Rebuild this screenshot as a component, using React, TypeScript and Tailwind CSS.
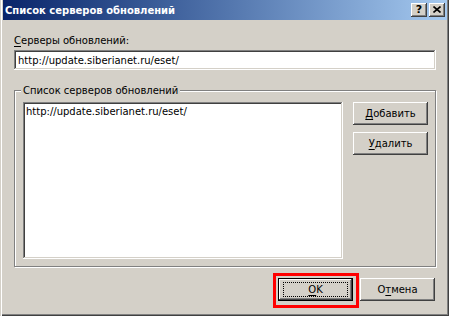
import React from "react";

const raised =
  "shadow-[inset_-1px_-1px_#404040,inset_1px_1px_#ffffff,inset_-2px_-2px_#808080,inset_2px_2px_#d4d0c8]";
const sunken =
  "shadow-[inset_-1px_-1px_#ffffff,inset_1px_1px_#808080,inset_-2px_-2px_#d4d0c8,inset_2px_2px_#404040]";

function Btn({ children, def }: { children: React.ReactNode; def?: boolean }) {
  if (def) {
    return (
      <div className="w-[75px] h-[23px] border border-black bg-[#d4d0c8] relative">
        <div
          className={
            "w-full h-full flex items-center justify-center " +
            "shadow-[inset_-1px_-1px_#404040,inset_1px_1px_#ffffff,inset_-2px_-2px_#808080,inset_2px_2px_#d4d0c8]"
          }
        >
          {children}
        </div>
        <div className="absolute left-[4px] top-[3px] right-[4px] bottom-[3px] border border-dotted border-black" />
      </div>
    );
  }
  return (
    <div className={"w-[75px] h-[23px] bg-[#d4d0c8] flex items-center justify-center " + raised}>
      {children}
    </div>
  );
}

export default function App() {
  return (
    <div
      className={
        "w-[449px] h-[316px] bg-[#d4d0c8] relative flex flex-col pl-[3px] pr-[2px] pb-[2px] text-[10px] leading-[13px] text-black font-['DejaVu_Sans',sans-serif] " +
        "shadow-[inset_1px_0_#d4d0c8,inset_2px_0_#ffffff,inset_-1px_-1px_#404040,inset_-2px_-2px_#808080]"
      }
    >
      {/* Title bar */}
      <div className="h-[20px] shrink-0 flex items-center bg-gradient-to-r from-[#0a246a] to-[#a6caf0] pl-[2px] pr-[2px]">
        <span className="text-white font-bold text-[10px] grow">Список серверов обновлений</span>
        <div className="flex gap-[2px]">
          <div className={"w-[16px] h-[14px] bg-[#d4d0c8] flex items-center justify-center " + raised}>
            <span className="font-bold text-[11px] leading-[11px] -mt-[1px]">?</span>
          </div>
          <div className={"w-[16px] h-[14px] bg-[#d4d0c8] flex items-center justify-center " + raised}>
            <svg width="8" height="7" viewBox="0 0 8 7" className="-mt-[1px]">
              <path d="M0.5 0.5 L7.5 6.5 M7.5 0.5 L0.5 6.5" stroke="#000" strokeWidth="1.6" fill="none" />
            </svg>
          </div>
        </div>
      </div>

      {/* Content */}
      <div className="flex flex-col pl-[11px] pr-[11px]">
        <div className="mt-[14px] h-[13px]">
          <span className="underline underline-offset-[2px]">С</span>ерверы обновлений:
        </div>
        <div className={"mt-[3px] h-[20px] bg-white flex items-center pl-[4px] " + sunken}>
          http://update.siberianet.ru/eset/
        </div>

        {/* Group box */}
        <div className="mt-[20px] h-[177px] border border-[#808080] shadow-[inset_1px_1px_#ffffff,1px_1px_#ffffff] relative flex pl-[8px] pt-[11px]">
          <span className="absolute left-[6px] -top-[7px] bg-[#d4d0c8] px-[2px]">Список серверов обновлений</span>
          <div className={"w-[320px] h-[157px] bg-white px-[3px] pt-[3px] " + sunken}>
            http://update.siberianet.ru/eset/
          </div>
          <div className="ml-[10px] flex flex-col gap-[7px]">
            <Btn>
              <span>
                <span className="underline underline-offset-[2px]">Д</span>обавить
              </span>
            </Btn>
            <Btn>
              <span>
                <span className="underline underline-offset-[2px]">У</span>далить
              </span>
            </Btn>
          </div>
        </div>

        {/* Bottom buttons */}
        <div className="mt-[11px] flex justify-end gap-[7px] mr-[1px]">
          <Btn def>
            <span>
              <span className="underline underline-offset-[2px]">O</span>K
            </span>
          </Btn>
          <Btn>
            <span>
              О<span className="underline underline-offset-[2px]">т</span>мена
            </span>
          </Btn>
        </div>
      </div>

      {/* Red highlight */}
      <div className="absolute left-[273px] top-[273px] w-[86px] h-[35px] border-[3px] border-[#ff0000]" />
    </div>
  );
}
